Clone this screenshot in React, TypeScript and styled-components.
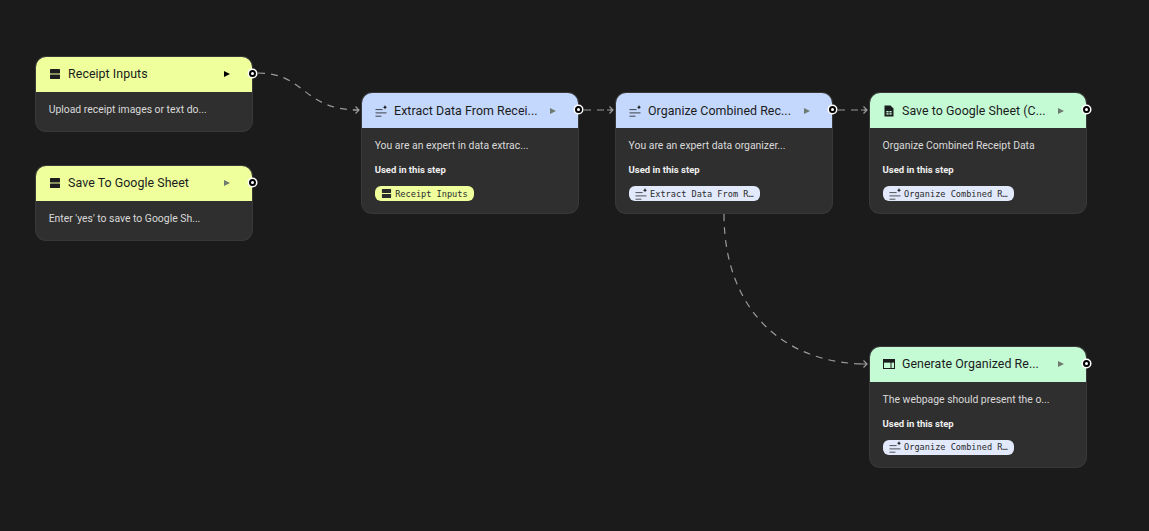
import React, { FC } from 'react'
import styled, { createGlobalStyle } from 'styled-components'

type Kind = 'input' | 'generate' | 'output'
type IconName = 'input' | 'spark' | 'sheet' | 'web'

type NodeData = {
  id: string
  x: number
  y: number
  kind: Kind
  icon: IconName
  title: string
  text: string
  playDark?: boolean
  used?: { icon: IconName; label: string; kind: 'input' | 'generate' }
}

const headerColors: Record<Kind, string> = {
  input: '#eeff9c',
  generate: '#c4d7fc',
  output: '#c4fbd4',
}

const nodes: NodeData[] = [
  { id: 'a', x: 35.7, y: 56.7, kind: 'input', icon: 'input', title: 'Receipt Inputs', text: 'Upload receipt images or text do...', playDark: true },
  { id: 'b', x: 35.7, y: 165.7, kind: 'input', icon: 'input', title: 'Save To Google Sheet', text: "Enter 'yes' to save to Google Sh..." },
  {
    id: 'c', x: 361.7, y: 93, kind: 'generate', icon: 'spark', title: 'Extract Data From Recei...', text: 'You are an expert in data extrac...',
    used: { icon: 'input', label: 'Receipt Inputs', kind: 'input' },
  },
  {
    id: 'd', x: 615.6, y: 93, kind: 'generate', icon: 'spark', title: 'Organize Combined Rec...', text: 'You are an expert data organizer...',
    used: { icon: 'spark', label: 'Extract Data From R…', kind: 'generate' },
  },
  {
    id: 'e', x: 869.6, y: 93, kind: 'output', icon: 'sheet', title: 'Save to Google Sheet (C...', text: 'Organize Combined Receipt Data',
    used: { icon: 'spark', label: 'Organize Combined R…', kind: 'generate' },
  },
  {
    id: 'f', x: 869.6, y: 346.7, kind: 'output', icon: 'web', title: 'Generate Organized Re...', text: 'The webpage should present the o...',
    used: { icon: 'spark', label: 'Organize Combined R…', kind: 'generate' },
  },
]

const edges = [
  { d: 'M258 73 C 306 73, 302 110, 359 110', tip: [359, 110] },
  { d: 'M584 110 L 613 110', tip: [613, 110] },
  { d: 'M838 110 L 867 110', tip: [867, 110] },
  { d: 'M724 214 C 724 312, 786 364, 867 364', tip: [867, 364] },
]

const NodeIcon: FC<{ name: IconName; size?: number }> = ({ name, size = 12 }) => {
  if (name === 'input') {
    return (
      <svg width={size} height={size} viewBox="0 0 12 12" fill="currentColor">
        <rect x="1" y="1" width="10" height="4.4" rx="0.4" />
        <rect x="1" y="6.6" width="10" height="4.4" rx="0.4" />
      </svg>
    )
  }
  if (name === 'spark') {
    return (
      <svg width={size} height={size} viewBox="0 0 12 12" fill="none" stroke="currentColor" strokeWidth="0.8">
        <path d="M0.5 4.6H7.6M0.5 7.9H11.5M0.5 11.2H6.4" />
        <path d="M10 0L10.7 1.6L12 2.3L10.7 3L10 4.6L9.3 3L8 2.3L9.3 1.6Z" fill="currentColor" stroke="none" />
      </svg>
    )
  }
  if (name === 'sheet') {
    return (
      <svg width={size} height={size} viewBox="0 0 12 12">
        <path d="M1.5 0.5H7.5L10.5 3.5V11.5H1.5Z" fill="currentColor" />
        <rect x="3.4" y="6" width="2.2" height="1.4" fill="#c4fbd4" />
        <rect x="6.4" y="6" width="2.2" height="1.4" fill="#c4fbd4" />
        <rect x="3.4" y="8.2" width="2.2" height="1.4" fill="#c4fbd4" />
        <rect x="6.4" y="8.2" width="2.2" height="1.4" fill="#c4fbd4" />
      </svg>
    )
  }
  return (
    <svg width={size} height={size} viewBox="0 0 12 12" fill="none" stroke="currentColor">
      <rect x="0.5" y="1.5" width="11" height="9" strokeWidth="1" />
      <rect x="0.5" y="1.5" width="11" height="2.6" fill="currentColor" strokeWidth="1" />
      <path d="M8 4V10.5" strokeWidth="1" />
    </svg>
  )
}

export default function App() {
  return (
    <>
      <GlobalStyle />
      <Canvas>
        <Edges width="1149" height="531">
          {edges.map(({ d, tip: [x, y] }) => (
            <g key={d}>
              <path d={d} strokeDasharray="7 6" />
              <path d={`M${x - 3.5} ${y - 3.5} L${x} ${y} L${x - 3.5} ${y + 3.5} M${x - 6} ${y} H${x}`} />
            </g>
          ))}
        </Edges>
        {nodes.map((node) => (
          <Node key={node.id} $x={node.x} $y={node.y}>
            <Header $kind={node.kind}>
              <IconSlot>
                <NodeIcon name={node.icon} />
              </IconSlot>
              <Title>{node.title}</Title>
              <Play $dark={node.playDark} />
            </Header>
            <Body>
              <Description>{node.text}</Description>
              {node.used && (
                <>
                  <UsedLabel>Used in this step</UsedLabel>
                  <Pill $kind={node.used.kind}>
                    <NodeIcon name={node.used.icon} size={node.used.icon === 'input' ? 11 : 12} />
                    <span>{node.used.label}</span>
                  </Pill>
                </>
              )}
            </Body>
            <Port />
          </Node>
        ))}
      </Canvas>
    </>
  )
}

const GlobalStyle = createGlobalStyle`
  html, body {
    margin: 0;
    padding: 0;
    background: #1b1b1b;
  }
`
const Canvas = styled.div`
  position: relative;
  width: 1149px;
  height: 531px;
  overflow: hidden;
  background: #1b1b1b;
  font-family: Roboto, 'Liberation Sans', sans-serif;
`
const Edges = styled.svg`
  position: absolute;
  inset: 0;
  fill: none;
  stroke: #9a9a9a;
  stroke-width: 1.2;
`
const Node = styled.div<{ $x: number; $y: number }>`
  position: absolute;
  left: ${({ $x }) => $x}px;
  top: ${({ $y }) => $y}px;
  width: 216.6px;
  box-sizing: border-box;
  border-radius: 10px;
  background: #2f2f2f;
  box-shadow: 0 0 0 1px #383838;
`
const Header = styled.div<{ $kind: Kind }>`
  display: flex;
  align-items: center;
  height: 35px;
  padding: 0 22.6px 0 13px;
  border-radius: 10px 10px 0 0;
  background: ${({ $kind }) => headerColors[$kind]};
  color: #1b1c1d;
`
const IconSlot = styled.span`
  display: flex;
  flex: none;
  width: 12px;
  margin-right: 7.4px;
`
const Title = styled.span`
  flex: 1;
  font-size: 12.4px;
  letter-spacing: 0.05px;
  line-height: 16px;
  white-space: nowrap;
  overflow: hidden;
`
const Play = styled.span<{ $dark?: boolean }>`
  flex: none;
  width: 0;
  height: 0;
  border-style: solid;
  border-width: 3.5px 0 3.5px 6px;
  border-color: transparent transparent transparent ${({ $dark }) => ($dark ? '#000' : '#6f7a70')};
`
const Body = styled.div`
  display: flex;
  flex-direction: column;
  align-items: flex-start;
  padding: 11px 13px 12px;
`
const Description = styled.div`
  margin-bottom: 2px;
  font-size: 10.4px;
  line-height: 14px;
  color: #dadada;
  white-space: nowrap;
`
const UsedLabel = styled.div`
  margin-top: 8px;
  font-size: 9.5px;
  line-height: 14px;
  font-weight: 700;
  color: #f0f0f0;
`
const Pill = styled.div<{ $kind: 'input' | 'generate' }>`
  display: flex;
  align-items: center;
  gap: 3px;
  height: 15px;
  margin-top: 9px;
  padding: 0 6.5px;
  border-radius: 6px;
  background: ${({ $kind }) => ($kind === 'input' ? '#eeff9c' : '#e1e9fb')};
  color: #2a2b2d;
  font-family: 'DejaVu Sans Mono', 'Liberation Mono', monospace;
  font-size: 8.6px;
  white-space: nowrap;
`
const Port = styled.span`
  position: absolute;
  right: -3.5px;
  top: 13px;
  width: 3px;
  height: 3px;
  border-radius: 50%;
  background: #fff;
  border: 2px solid #000;
  box-shadow: 0 0 0 1.5px #fff;
`
